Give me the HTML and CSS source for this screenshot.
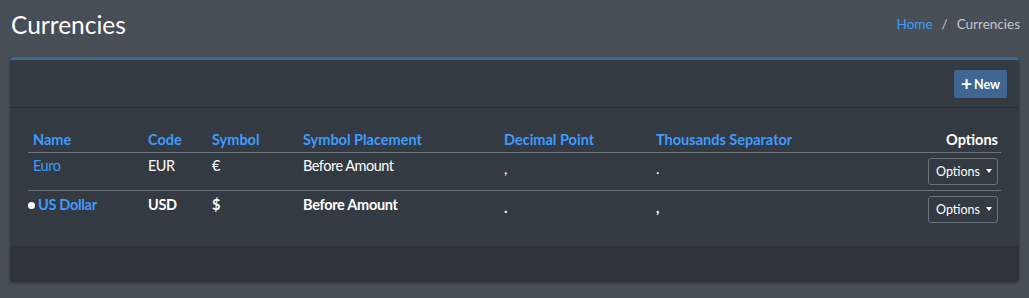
FILE: index.html
```html
<!DOCTYPE html>
<html>
<head>
<meta charset="utf-8">
<link rel="stylesheet" href="styles.css">
</head>
<body>
<div class="page">
  <div class="content-header">
    <h1 class="title">Currencies</h1>
    <ol class="breadcrumb">
      <li><a href="#" class="link">Home</a></li>
      <li class="sep">/</li>
      <li class="current">Currencies</li>
    </ol>
  </div>
  <div class="card">
    <div class="card-header">
      <button class="btn-new"><span class="plus">+</span>New</button>
    </div>
    <div class="card-body">
      <table class="table">
        <colgroup>
          <col class="c-name"><col class="c-code"><col class="c-sym"><col class="c-place"><col class="c-dec"><col class="c-thou"><col class="c-opt">
        </colgroup>
        <thead>
          <tr>
            <th>Name</th><th>Code</th><th>Symbol</th><th>Symbol Placement</th><th>Decimal Point</th><th>Thousands Separator</th><th class="opt-head">Options</th>
          </tr>
        </thead>
        <tbody>
          <tr>
            <td><a href="#" class="link">Euro</a></td><td>EUR</td><td>€</td><td>Before Amount</td><td class="punct">,</td><td class="punct">.</td>
            <td class="opt"><button class="btn-opt">Options<span class="caret"></span></button></td>
          </tr>
          <tr class="default">
            <td><span class="dot"></span><a href="#" class="link">US Dollar</a></td><td>USD</td><td>$</td><td>Before Amount</td><td class="punct">.</td><td class="punct">,</td>
            <td class="opt"><button class="btn-opt">Options<span class="caret"></span></button></td>
          </tr>
        </tbody>
      </table>
    </div>
    <div class="card-footer"></div>
  </div>
</div>
</body>
</html>
```

FILE: styles.css
```css
* { box-sizing: border-box; }
html, body { margin: 0; padding: 0; }
body {
  background: #474e56;
  font-family: Lato, "Liberation Sans", sans-serif;
  color: #ffffff;
  width: 1029px;
  height: 298px;
  overflow: hidden;
}
.page { padding: 0 10px; }
.content-header {
  display: flex;
  justify-content: space-between;
  align-items: center;
  height: 57px;
  padding: 0 0 8px 1px;
}
.title {
  margin: 0;
  font-weight: 400;
  font-size: 24.5px;
  color: #ffffff;
}
.breadcrumb {
  list-style: none;
  margin: 0 -1px 0 0;
  padding: 0 0 2px 0;
  display: flex;
  gap: 9px;
  font-size: 13.5px;
}
.link { color: #3f9bff; text-decoration: none; }
.sep, .current { color: #c2c7d0; }
.card {
  background: #343a41;
  border-top: 3px solid #3f6791;
  border-radius: 4px;
  box-shadow: 0 0 1px rgba(0,0,0,.3), 0 1px 3px rgba(0,0,0,.3);
  overflow: hidden;
}
.card-header {
  height: 48px;
  border-bottom: 1px solid #2c3036;
  display: flex;
  justify-content: flex-end;
  align-items: center;
  padding: 0 12px;
}
.btn-new {
  background: #3f6791;
  border: none;
  border-radius: 3px;
  color: #fff;
  font-family: inherit;
  font-size: 12.5px;
  font-weight: 700;
  height: 28px;
  width: 53px;
  display: flex;
  align-items: center;
  justify-content: center;
  gap: 2px;
  padding: 0;
  margin-top: 1px;
}
.plus { font-size: 19px; font-weight: 700; line-height: 1; margin-top: -2px; }
.card-body { padding: 20px 18px 18px 18px; }
.table {
  width: 973px;
  border-collapse: collapse;
  font-size: 14.5px;
}
.c-name { width: 115px; }
.c-code { width: 64px; }
.c-sym { width: 91px; }
.c-place { width: 201px; }
.c-dec { width: 152px; }
.c-thou { width: 200px; }
th {
  text-align: left;
  color: #3f9bff;
  font-weight: 700;
  height: 24px;
  padding: 0 5px;
  border-bottom: 1px solid #6c737b;
  vertical-align: middle;
}
th.opt-head { color: #fff; text-align: right; padding-right: 3px; }
td {
  height: 38px;
  padding: 4px 5px 0 5px;
  vertical-align: top;
  line-height: 1.2;
  border-top: 1px solid #6c737b;
  font-size: 14.5px;
  letter-spacing: -0.5px;
}
tbody tr:first-child td { border-top: none; }
td.punct { padding-top: 7px; }
.default td { font-weight: 700; letter-spacing: -0.3px; padding-top: 5px; }
.default td.punct { padding-top: 8px; }
.default td:first-child { padding-left: 0; }
.dot {
  display: inline-block;
  width: 7px;
  height: 7px;
  border-radius: 50%;
  background: #fff;
  margin-right: 3px;
  vertical-align: 1px;
}
td.opt, .default td.opt { text-align: right; padding: 5px 3px 0 0; letter-spacing: 0; font-weight: 400; }
.btn-opt {
  background: transparent;
  border: 1px solid #6c737b;
  border-radius: 3px;
  color: #fff;
  font-family: inherit;
  font-size: 12.5px;
  font-weight: 400;
  height: 27px;
  width: 70px;
  padding: 0 0 0 2px;
  display: inline-flex;
  align-items: center;
  justify-content: center;
  gap: 6px;
}
.caret {
  width: 0; height: 0;
  border-left: 3.5px solid transparent;
  border-right: 3.5px solid transparent;
  border-top: 4px solid #fff;
}
.card-footer {
  height: 36px;
  background: #2f333b;
}
```
